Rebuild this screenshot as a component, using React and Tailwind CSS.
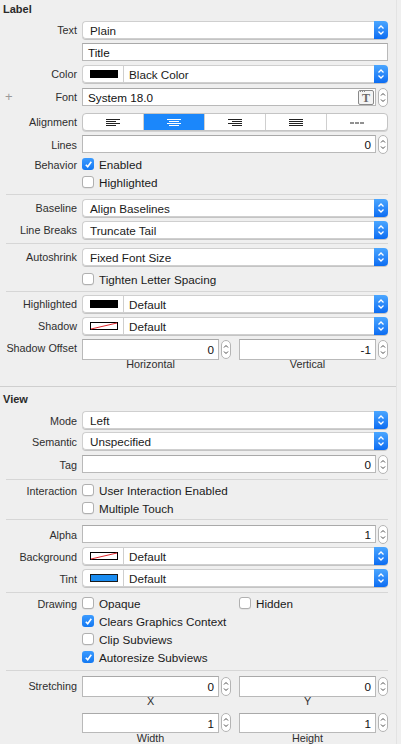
const Chevrons = () => (
  <svg width="14" height="18" viewBox="0 0 14 18" fill="none">
    <path d="M4.5 7.5 L7 5 L9.5 7.5" stroke="white" strokeWidth="1.3" />
    <path d="M4.5 10.5 L7 13 L9.5 10.5" stroke="white" strokeWidth="1.3" />
  </svg>
);

const PopupArrow = () => (
  <div className="flex h-full w-[14px] shrink-0 items-center justify-center rounded-r-[4px] bg-gradient-to-b from-[#4aa6ff] to-[#0a6cf2]">
    <Chevrons />
  </div>
);

const Popup = ({ text }) => (
  <div className="flex h-full w-full shadow-[0_1px_0.5px_rgba(0,0,0,0.18)] rounded-[4px]">
    <div className="flex flex-1 items-center rounded-l-[4px] border border-r-0 border-[#cfcfcf] bg-white pl-[7px] pt-px text-[11.7px] text-[#1a1a1a]">
      {text}
    </div>
    <PopupArrow />
  </div>
);

const Swatch = ({ kind }) => {
  if (kind === "black") {
    return <div className="h-[8px] w-[28px] bg-black" />;
  }
  if (kind === "blue") {
    return <div className="h-[8px] w-[28px] border border-[#1b1b1b] bg-[#1a8cf0]" />;
  }
  return (
    <svg width="28" height="8" viewBox="0 0 28 8">
      <rect x="0.5" y="0.5" width="27" height="7" fill="white" stroke="black" />
      <path d="M1 7 L27 1" stroke="#e0262b" strokeWidth="1" />
    </svg>
  );
};

const ColorPopup = ({ swatch, text }) => (
  <div className="flex h-full w-full shadow-[0_1px_0.5px_rgba(0,0,0,0.18)] rounded-[4px]">
    <div className="flex flex-1 items-center rounded-l-[4px] border border-r-0 border-[#cfcfcf] bg-white text-[11.7px] text-[#1a1a1a]">
      <div className="flex h-full w-[41px] items-center justify-center border-r border-[#cfcfcf] pl-[1px]">
        <Swatch kind={swatch} />
      </div>
      <span className="pl-[5px] pt-px">{text}</span>
    </div>
    <PopupArrow />
  </div>
);

const Stepper = () => (
  <div className="ml-[2px] flex h-[19px] w-[10px] shrink-0 items-center justify-center rounded-[5px] border border-[#b4b4b4] bg-white">
    <svg width="8" height="17" viewBox="0 0 8 17" fill="none">
      <path d="M2 6.5 L4 4.5 L6 6.5" stroke="#4a4a4a" strokeWidth="1" />
      <path d="M2 10.5 L4 12.5 L6 10.5" stroke="#4a4a4a" strokeWidth="1" />
    </svg>
  </div>
);

const TextField = ({ value, right, children }) => (
  <div
    className={`flex h-full flex-1 items-center border border-[#b9b9b9] border-t-[#a9a9a9] bg-white pt-px text-[11.7px] text-[#111] ${
      right ? "justify-end pr-[4px]" : "pl-[5px]"
    }`}
  >
    {value}
    {children}
  </div>
);

const NumberField = ({ value }) => (
  <div className="flex h-full w-full items-center">
    <TextField value={value} right />
    <Stepper />
  </div>
);

const Row = ({ label, className, children }) => (
  <div className={`flex items-center ${className}`}>
    <div className="w-[77px] shrink-0 pt-px text-right text-[10.8px] text-[#2e2e2e]">{label}</div>
    <div className="ml-[5px] flex h-full flex-1 items-center">{children}</div>
  </div>
);

const Checkbox = ({ checked, label }) => (
  <div className="flex items-center">
    {checked ? (
      <div className="flex h-[12px] w-[12px] items-center justify-center rounded-[3px] bg-gradient-to-b from-[#3b9bff] to-[#1178f2]">
        <svg width="9" height="9" viewBox="0 0 9 9" fill="none">
          <path d="M1.8 4.8 L3.7 6.8 L7.3 1.8" stroke="white" strokeWidth="1.6" />
        </svg>
      </div>
    ) : (
      <div className="h-[12px] w-[12px] rounded-[3px] border border-[#b0b0b0] bg-white shadow-[0_0.5px_0.5px_rgba(0,0,0,0.1)]" />
    )}
    <span className="ml-[5px] pt-px text-[11.7px] text-[#1a1a1a]">{label}</span>
  </div>
);

const AlignIcon = ({ kind, color }) => {
  const lines = {
    left: [[0, 14], [0, 10], [0, 14], [0, 10]],
    center: [[0, 14], [2, 10], [0, 14], [2, 10]],
    right: [[0, 14], [4, 10], [0, 14], [4, 10]],
    justify: [[0, 14], [0, 14], [0, 14], [0, 14]],
  };
  if (kind === "natural") {
    return (
      <svg width="14" height="8" viewBox="0 0 14 8">
        <path d="M0 4 H4 M5 4 H9 M10 4 H14" stroke={color} strokeWidth="1" />
      </svg>
    );
  }
  return (
    <svg width="14" height="8" viewBox="0 0 14 8">
      {lines[kind].map(([x, w], i) => (
        <rect key={i} x={x} y={i * 2} width={w} height="1" fill={color} />
      ))}
    </svg>
  );
};

const Segmented = () => {
  const items = ["left", "center", "right", "justify", "natural"];
  return (
    <div className="flex h-full w-full overflow-hidden rounded-[4px] border border-[#c4c4c4] bg-white shadow-[0_1px_0.5px_rgba(0,0,0,0.12)]">
      {items.map((kind, i) => (
        <div
          key={kind}
          className={`flex flex-1 items-center justify-center pt-px ${i > 0 ? "border-l border-[#cfcfcf]" : ""} ${
            kind === "center" ? "bg-[#1b87fb]" : ""
          }`}
        >
          <AlignIcon kind={kind} color={kind === "center" ? "white" : "#222"} />
        </div>
      ))}
    </div>
  );
};

const FontIcon = () => (
  <div className="mr-[1px] flex h-[15px] w-[16px] flex-col rounded-[2px] border border-[#8a8a8a] bg-[#f4f4f4]">
    <div className="flex h-[3px] items-center gap-[1px] pl-[1px]">
      <div className="h-[1px] w-[1px] bg-[#8a8a8a]" />
      <div className="h-[1px] w-[1px] bg-[#8a8a8a]" />
      <div className="h-[1px] w-[1px] bg-[#8a8a8a]" />
    </div>
    <div className="flex flex-1 items-center justify-center font-['Liberation_Serif',serif] text-[12px] font-bold leading-none text-[#6a6a6a]">
      T
    </div>
  </div>
);

const Separator = ({ className }) => <div className={`ml-[6px] h-px bg-[#d6d6d6] ${className}`} />;

const SubLabels = ({ left, right, className }) => (
  <div className={`flex text-[10.8px] leading-none text-[#2e2e2e] ${className}`}>
    <div className="w-[82px] shrink-0" />
    <div className="grid flex-1 grid-cols-2 gap-x-[8px]">
      <div className="pr-[12px] text-center">{left}</div>
      <div className="pr-[12px] text-center">{right}</div>
    </div>
  </div>
);

const PairRow = ({ label, left, right, className }) => (
  <Row label={label} className={className}>
    <div className="grid h-full w-full grid-cols-2 gap-x-[8px]">
      <NumberField value={left} />
      <NumberField value={right} />
    </div>
  </Row>
);

export default function App() {
  return (
    <div className="flex h-[744px] w-[401px] overflow-hidden bg-[#efefef] font-['Liberation_Sans',Arial,sans-serif]">
      <div className="flex w-[397px] shrink-0 flex-col border-r border-[#e3e3e3] pr-[8px]">
        <div className="h-[22px] pl-[3px] pt-px text-[11px] font-bold leading-[16px] text-[#2a2a2a]">Label</div>
        <Row label="Text" className="h-[18px]">
          <Popup text="Plain" />
        </Row>
        <Row label="" className="mt-[4px] h-[18px]">
          <TextField value="Title" />
        </Row>
        <Row label="Color" className="mt-[4px] h-[18px]">
          <ColorPopup swatch="black" text="Black Color" />
        </Row>
        <div className="relative mt-[5px] h-[18px]">
          <span className="absolute left-[5px] top-[2px] text-[13px] font-light leading-none text-[#9a9a9a]">+</span>
          <Row label="Font" className="h-full">
            <div className="flex h-full w-full items-center">
              <TextField value="System 18.0">
                <div className="ml-auto">
                  <FontIcon />
                </div>
              </TextField>
              <Stepper />
            </div>
          </Row>
        </div>
        <Row label="Alignment" className="mt-[7px] h-[19px]">
          <Segmented />
        </Row>
        <Row label="Lines" className="mt-[4px] h-[18px]">
          <NumberField value="0" />
        </Row>
        <Row label="Behavior" className="mt-[2px] h-[18px]">
          <Checkbox checked label="Enabled" />
        </Row>
        <Row label="" className="h-[18px]">
          <Checkbox label="Highlighted" />
        </Row>
        <Separator className="mt-[3px]" />
        <Row label="Baseline" className="mt-[4px] h-[18px]">
          <Popup text="Align Baselines" />
        </Row>
        <Row label="Line Breaks" className="mt-[4px] h-[18px]">
          <Popup text="Truncate Tail" />
        </Row>
        <Separator className="mt-[4px]" />
        <Row label="Autoshrink" className="mt-[4px] h-[18px]">
          <Popup text="Fixed Font Size" />
        </Row>
        <Row label="" className="mt-[4px] h-[18px]">
          <Checkbox label="Tighten Letter Spacing" />
        </Row>
        <Separator className="mt-[3px]" />
        <Row label="Highlighted" className="mt-[3px] h-[18px]">
          <ColorPopup swatch="black" text="Default" />
        </Row>
        <Row label="Shadow" className="mt-[4px] h-[18px]">
          <ColorPopup swatch="none" text="Default" />
        </Row>
        <PairRow label="Shadow Offset" left="0" right="-1" className="mt-[4px] h-[18px]" />
        <SubLabels left="Horizontal" right="Vertical" className="mt-[2px] h-[12px]" />

        <div className="-mr-[8px] mt-[16px] h-px bg-[#cfcfcf]" />

        <div className="mt-[3px] h-[16px] pl-[3px] pt-px text-[11px] font-bold leading-[16px] text-[#2a2a2a]">View</div>
        <Row label="Mode" className="mt-[5px] h-[18px]">
          <Popup text="Left" />
        </Row>
        <Row label="Semantic" className="mt-[3px] h-[18px]">
          <Popup text="Unspecified" />
        </Row>
        <Row label="Tag" className="mt-[5px] h-[18px]">
          <NumberField value="0" />
        </Row>
        <Separator className="mt-[6px]" />
        <Row label="Interaction" className="mt-[1px] h-[18px]">
          <Checkbox label="User Interaction Enabled" />
        </Row>
        <Row label="" className="h-[18px]">
          <Checkbox label="Multiple Touch" />
        </Row>
        <Separator className="mt-[2px]" />
        <Row label="Alpha" className="mt-[5px] h-[18px]">
          <NumberField value="1" />
        </Row>
        <Row label="Background" className="mt-[4px] h-[18px]">
          <ColorPopup swatch="none" text="Default" />
        </Row>
        <Row label="Tint" className="mt-[4px] h-[18px]">
          <ColorPopup swatch="blue" text="Default" />
        </Row>
        <Separator className="mt-[5px]" />
        <Row label="Drawing" className="mt-[1px] h-[18px]">
          <div className="grid w-full grid-cols-2 gap-x-[8px]">
            <Checkbox label="Opaque" />
            <Checkbox label="Hidden" />
          </div>
        </Row>
        <Row label="" className="h-[18px]">
          <Checkbox checked label="Clears Graphics Context" />
        </Row>
        <Row label="" className="h-[18px]">
          <Checkbox label="Clip Subviews" />
        </Row>
        <Row label="" className="h-[18px]">
          <Checkbox checked label="Autoresize Subviews" />
        </Row>
        <Separator className="mt-[4px]" />
        <PairRow label="Stretching" left="0" right="0" className="mt-[5px] h-[18px]" />
        <SubLabels left="X" right="Y" className="mt-[2px] h-[12px]" />
        <PairRow label="" left="1" right="1" className="mt-[5px] h-[18px]" />
        <SubLabels left="Width" right="Height" className="mt-[2px] h-[12px]" />
      </div>
    </div>
  );
}
